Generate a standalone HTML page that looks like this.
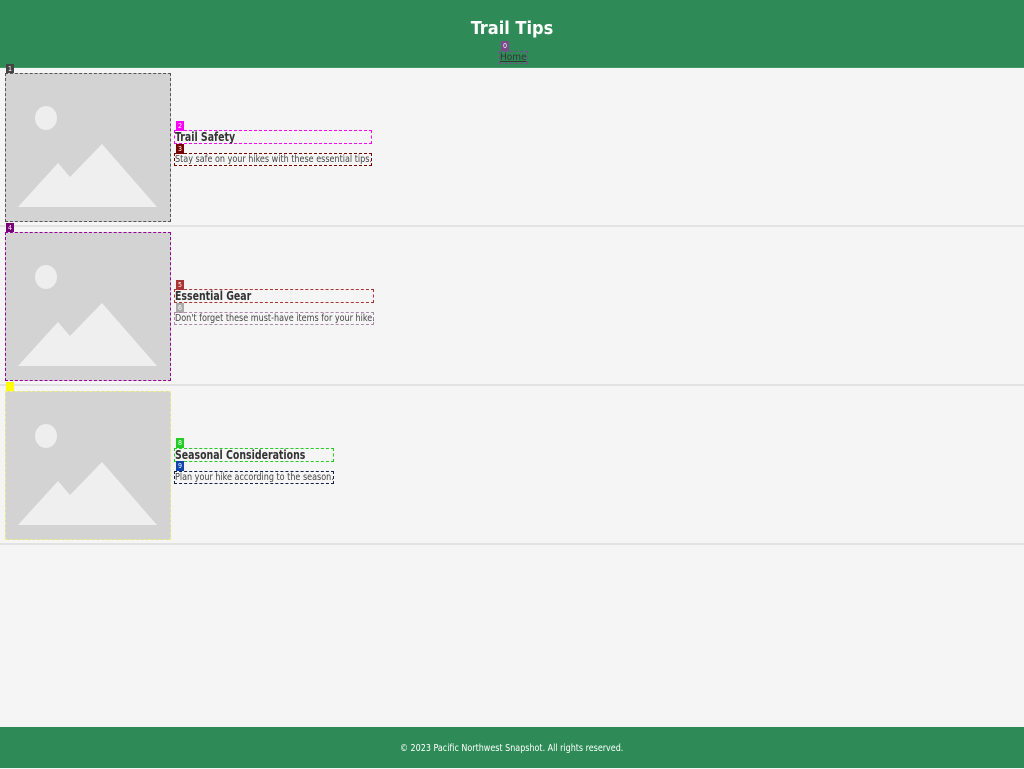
<!DOCTYPE html>
<html><head><style>
*{margin:0;padding:0;box-sizing:border-box}
body{width:1024px;height:768px;background:#f5f5f5;font-family:"DejaVu Sans Condensed","DejaVu Sans","Liberation Sans",sans-serif;font-stretch:condensed;position:relative;overflow:hidden;color:#333;white-space:nowrap}
.hdr{position:absolute;left:0;top:0;width:1024px;height:68px;background:#2e8b57;border-bottom:1px solid #3f9a66}
.hdr h1{position:absolute;top:18px;width:100%;text-align:center;color:#fff;font-size:18px;font-weight:bold}
.home{position:absolute;left:500px;top:52px;font-size:10px;color:#333;text-decoration:underline;outline:1px dashed #7a4a8a}
.lbl{position:absolute;font-size:7px;color:#fff;width:8px;height:10px;text-align:center;line-height:10px}
.row{position:absolute;left:0;width:1024px;height:159px;border-bottom:2px solid #e2e2e2}
.img{position:absolute;left:5px;top:5px;width:166px;height:149px;background:#d3d3d3}
.t{position:absolute;left:174px;font-size:12px;font-weight:bold;height:14px;line-height:13px;color:#333}
.d{position:absolute;left:174px;font-size:10px;height:13px;line-height:12px;color:#444}
.t span,.d span,.ft span{display:inline-block;transform-origin:0 50%}
.t span{transform:scaleX(0.87)}
.d span{transform:scaleX(0.895)}
.ft{position:absolute;left:0;top:727px;width:1024px;height:41px;background:#2e8b57;color:#fff;font-size:10px;line-height:41px}
.ft span{position:absolute;left:400px;top:1px;transform:scaleX(0.89)}
</style></head><body>
<div class="hdr"><h1>Trail Tips</h1>
<div class="lbl" style="left:501px;top:41px;background:#7a4a8a">0</div>
<span class="home">Home</span></div>

<div class="row" style="top:68px">
<div class="lbl" style="left:6px;top:-4px;background:#444">1</div>
<div class="img" style="border:1px dashed #555"><svg width="164" height="147" viewBox="0 0 164 147"><ellipse cx="40" cy="44" rx="11" ry="12" fill="#eee"/><polygon points="12,133 52,89 64,103 96,70 151,133" fill="#efefef"/></svg></div>
<div class="lbl" style="left:176px;top:53px;background:#f0f">2</div>
<div class="t" style="top:62px;width:198px;border:1px dashed #f0f"><span>Trail Safety</span></div>
<div class="lbl" style="left:176px;top:76px;background:#700">3</div>
<div class="d" style="top:85px;width:198px;border:1px dashed #700"><span>Stay safe on your hikes with these essential tips.</span></div>
</div>

<div class="row" style="top:227px">
<div class="lbl" style="left:6px;top:-4px;background:#707">4</div>
<div class="img" style="border:1px dashed #909"><svg width="164" height="147" viewBox="0 0 164 147"><ellipse cx="40" cy="44" rx="11" ry="12" fill="#eee"/><polygon points="12,133 52,89 64,103 96,70 151,133" fill="#efefef"/></svg></div>
<div class="lbl" style="left:176px;top:53px;background:#a33">5</div>
<div class="t" style="top:62px;width:200px;border:1px dashed #a33"><span>Essential Gear</span></div>
<div class="lbl" style="left:176px;top:76px;background:#aaa">6</div>
<div class="d" style="top:85px;width:200px;border:1px dashed #a8a"><span>Don't forget these must-have items for your hike.</span></div>
</div>

<div class="row" style="top:386px">
<div class="lbl" style="left:6px;top:-4px;background:#ff0;color:#ff0">7</div>
<div class="img" style="border:1px dashed #ee8"><svg width="164" height="147" viewBox="0 0 164 147"><ellipse cx="40" cy="44" rx="11" ry="12" fill="#eee"/><polygon points="12,133 52,89 64,103 96,70 151,133" fill="#efefef"/></svg></div>
<div class="lbl" style="left:176px;top:52px;background:#2c2">8</div>
<div class="t" style="top:62px;width:160px;border:1px dashed #2c2"><span>Seasonal Considerations</span></div>
<div class="lbl" style="left:176px;top:75px;background:#14a">9</div>
<div class="d" style="top:85px;width:160px;border:1px dashed #124"><span>Plan your hike according to the season.</span></div>
</div>

<div class="ft"><span>© 2023 Pacific Northwest Snapshot. All rights reserved.</span></div>
</body></html>
